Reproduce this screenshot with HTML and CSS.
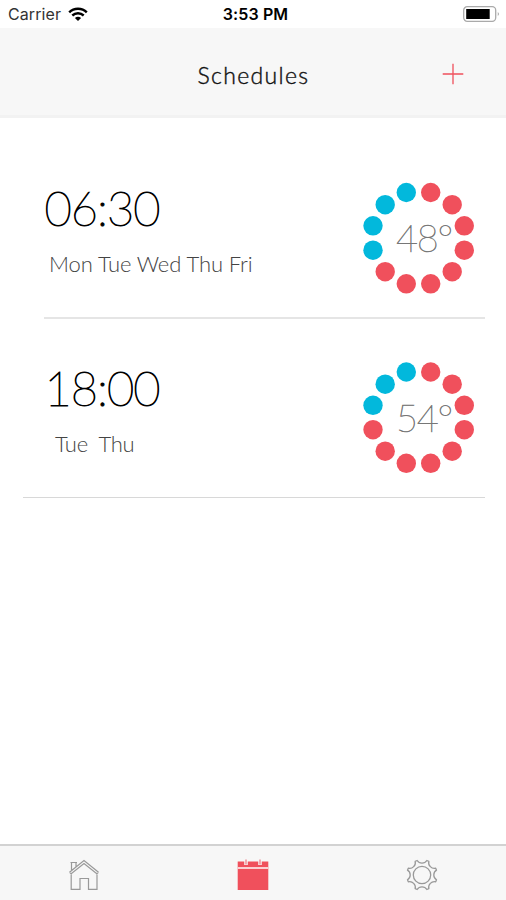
FILE: index.html
```html
<!DOCTYPE html>
<html lang="en">
<head>
<meta charset="utf-8">
<title>Schedules</title>
<link rel="stylesheet" href="styles.css">
</head>
<body>
<div class="status">
  <div class="carrier"><span class="carrier-name">Carrier</span>
    <svg class="wifi" width="20" height="15" viewBox="0 0 20 15" fill="none" stroke="#000" stroke-width="2.4"><path d="M1.2 5.3C6 .6 14 .6 18.800 5.300M4.300 8.500C7.500 5.500 12.500 5.500 15.700 8.500"/><path d="M10 14 6.900 10.900Q10 8.500 13.100 10.900Z" fill="#000" stroke="none"/></svg>
  </div>
  <div class="clock">3:53 PM</div>
  <svg class="battery" width="38" height="18" viewBox="0 0 38 18"><rect x="1.700" y="1.700" width="32" height="14.600" rx="3.500" fill="#fff" stroke="#aaa" stroke-width="1.300"/><rect x="4.200" y="4" width="23.500" height="10" fill="#000"/><path d="M35.800 7q2 2 0 4z" fill="#999"/></svg>
</div>
<header class="header">
  <h1 class="title">Schedules</h1>
  <svg class="add" width="22" height="22" viewBox="0 0 22 22" stroke="#f0505c" stroke-width="1.300"><path d="M11 .7v20.600M.7 11h20.600"/></svg>
</header>
<main class="list">
  <section class="row">
    <div class="info">
      <div class="time">06:30</div>
      <div class="days">Mon Tue Wed Thu Fri</div>
    </div>
    <div class="dial">
      <svg class="ring" viewBox="-55.500 -56 112 112" width="112" height="112">
        <g fill="#f0505c"><circle cx="12.200" cy="-45.500" r="9.700"/><circle cx="33.700" cy="-33.300" r="9.700"/><circle cx="45.800" cy="-12.200" r="9.700"/><circle cx="45.800" cy="12.200" r="9.700"/><circle cx="33.700" cy="33.700" r="9.700"/><circle cx="12.200" cy="45.800" r="9.700"/><circle cx="-12.200" cy="45.800" r="9.700"/><circle cx="-33.300" cy="33.700" r="9.700"/></g>
        <g fill="#02b8dc"><circle cx="-45.500" cy="12.200" r="9.700"/><circle cx="-45.500" cy="-12.200" r="9.700"/><circle cx="-33.300" cy="-33.300" r="9.700"/><circle cx="-12.200" cy="-45.500" r="9.700"/></g>
      </svg>
      <span class="temp">48°</span>
    </div>
  </section>
  <section class="row row-last">
    <div class="info">
      <div class="time">18:00</div>
      <div class="days days-short">Tue&nbsp; Thu</div>
    </div>
    <div class="dial">
      <svg class="ring" viewBox="-55.500 -55.500 112 112" width="112" height="112">
        <g fill="#f0505c"><circle cx="12.200" cy="-45.500" r="9.700"/><circle cx="33.700" cy="-33.300" r="9.700"/><circle cx="45.800" cy="-12.200" r="9.700"/><circle cx="45.800" cy="12.200" r="9.700"/><circle cx="33.700" cy="33.700" r="9.700"/><circle cx="12.200" cy="45.800" r="9.700"/><circle cx="-12.200" cy="45.800" r="9.700"/><circle cx="-33.300" cy="33.700" r="9.700"/><circle cx="-45.500" cy="12.200" r="9.700"/></g>
        <g fill="#02b8dc"><circle cx="-45.500" cy="-12.200" r="9.700"/><circle cx="-33.300" cy="-33.300" r="9.700"/><circle cx="-12.200" cy="-45.500" r="9.700"/></g>
      </svg>
      <span class="temp">54°</span>
    </div>
  </section>
</main>
<nav class="tabs">
  <svg class="tab" width="32" height="32" viewBox="0 0 32 32" fill="none" stroke="#999" stroke-width="1.200"><path d="M3.200 15.500V30.300H12V19.500H20.500V30.300H29V15.500M1.500 13.200 16 1.500 30.500 13.200M1.500 13.200 3.200 14.800 16 4.500 28.800 14.800 30.500 13.200M3.500 11V3.500H8V7.500M2.500 3.500H9"/></svg>
  <svg class="tab" width="32" height="32" viewBox="0 0 32 32"><path fill="#f0505c" d="M.7 2.500H31.300V31H.7z"/><path fill="#fbd0d3" d="M.7 8H31.300V10H.7z"/><path d="M9 0V6M23 0V6" stroke="#f7f7f7" stroke-width="3.500"/><path d="M9 .5V5.500M23 .5V5.500" stroke="#f0808a" stroke-width="1.300"/></svg>
  <svg class="tab" width="32" height="32" viewBox="-16 -16 32 32" fill="none" stroke="#999" stroke-width="1.300" stroke-linejoin="round"><circle r="8.700"/><path d="M-4.850-14.500A5.700 5.700 0 0 0 4.850-14.500L6.830-13.700A5.700 5.700 0 0 0 13.700-6.830L14.500-4.850A5.700 5.700 0 0 0 14.500 4.850L13.700 6.830A5.700 5.700 0 0 0 6.830 13.700L4.850 14.500A5.700 5.700 0 0 0-4.850 14.500L-6.830 13.700A5.700 5.700 0 0 0-13.700 6.830L-14.500 4.850A5.700 5.700 0 0 0-14.500-4.850L-13.700-6.830A5.700 5.700 0 0 0-6.830-13.700Z"/></svg>
</nav>
</body>
</html>
```
FILE: styles.css
```css
* { box-sizing: border-box; }
body {
  margin: 0;
  height: 900px;
  display: flex;
  flex-direction: column;
  background: #fff;
  color: #000;
  font-family: Lato, sans-serif;
  overflow: hidden;
}
.status {
  height: 28px;
  display: grid;
  grid-template-columns: 1fr auto 1fr;
  align-items: center;
  padding: 0 6px 0 8px;
  font-family: Inter, sans-serif;
  font-size: 16px;
}
.carrier { display: flex; align-items: center; gap: 7px; }
.carrier-name { color: #333; letter-spacing: 0.1px; }
.clock { font-weight: 600; padding-left: 3px; letter-spacing: 0.1px; }
.battery { justify-self: end; }
.header {
  height: 90px;
  display: grid;
  grid-template-columns: 1fr auto 1fr;
  align-items: center;
  background: #f7f7f7;
  border-bottom: 3px solid #f2f2f2;
  padding-top: 4px;
}
.title {
  grid-column: 2;
  margin: 0;
  padding: 3px 0 0 1px;
  font-size: 23px;
  font-weight: 300;
  letter-spacing: 1.35px;
  color: #111;
  -webkit-text-stroke: 0.4px #111;
}
.add { justify-self: end; margin-right: 42px; }
.list { flex: 1; padding: 20px 21px 0 44px; }
.row {
  height: 181px;
  display: flex;
  justify-content: space-between;
  align-items: flex-start;
  border-bottom: 2px solid #e5e5e5;
}
.row-last {
  height: 179px;
  margin-left: -21px;
  padding-left: 21px;
  border-bottom-width: 1px;
  border-color: #d8d8d8;
}
.info { padding-top: 42px; }
.row-last .info { padding-top: 41px; }
.time {
  font-size: 47px;
  line-height: 56px;
  font-weight: 100;
  letter-spacing: -1px;
  padding-left: 0.5px;
  -webkit-text-stroke: 1px #000;
}
.days {
  margin: 14px 0 0 5px;
  font-size: 22px;
  line-height: 28px;
  font-weight: 300;
  letter-spacing: -0.1px;
  color: #444;
}
.days-short { margin-left: 11px; letter-spacing: -0.3px; }
.dial {
  width: 112px;
  height: 112px;
  margin: 44px 10px 0 0;
  display: grid;
  place-items: center;
}
.row-last .dial { margin-top: 43px; }
.ring, .temp { grid-area: 1 / 1; }
.temp {
  padding: 0 0 2px 10px;
  font-size: 38px;
  font-weight: 100;
  letter-spacing: -1.3px;
  color: #777;
  -webkit-text-stroke: 0.6px #777;
}
.tabs {
  height: 56px;
  display: grid;
  grid-template-columns: repeat(3, 1fr);
  justify-items: center;
  align-items: center;
  background: #f7f7f7;
  border-top: 2px solid #d2d2d2;
  padding-top: 3px;
}
.tab { display: block; }
```
